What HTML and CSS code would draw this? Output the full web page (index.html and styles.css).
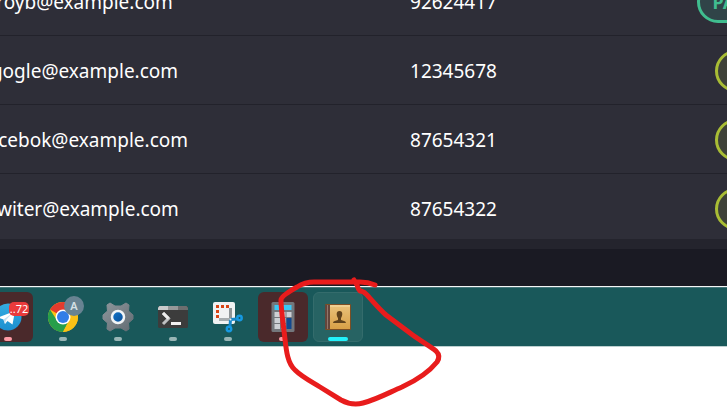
FILE: index.html
```
<!DOCTYPE html>
<html lang="en">
<head>
<meta charset="utf-8">
<title>Members</title>
<link rel="stylesheet" href="styles.css">
</head>
<body>
<main class="app">
  <table class="members">
    <colgroup><col class="col-wide"><col class="col-wide"><col class="col-status"></colgroup>
    <tbody>
      <tr><td>royb@example.com</td><td>92624417</td><td><span class="badge badge-green">PA</span></td></tr>
      <tr><td>gogle@example.com</td><td>12345678</td><td><span class="badge badge-lime"></span></td></tr>
      <tr><td>facebok@example.com</td><td>87654321</td><td><span class="badge badge-lime"></span></td></tr>
      <tr><td>twiter@example.com</td><td>87654322</td><td><span class="badge badge-lime"></span></td></tr>
    </tbody>
  </table>
  <div class="table-foot"></div>
</main>
<nav class="taskbar" aria-label="Taskbar">
  <button class="task alert" aria-label="Telegram">
    <svg class="icon" viewBox="0 0 40 40">
      <defs><linearGradient id="tg" x1="0" y1="0" x2="0" y2="1"><stop offset="0" stop-color="#35ace0"/><stop offset="1" stop-color="#1c8fd0"/></linearGradient></defs>
      <circle cx="20" cy="20" r="13.5" fill="url(#tg)"/>
      <path d="M10 20.500 27 14 24.500 27.500 19.500 24 17 27 15.500 22.500Z" fill="#fff"/>
      <path d="M15.500 22.500 24 16.500 18 23 17 27Z" fill="#c5dff0"/>
    </svg>
    <span class="count">..72</span>
  </button>
  <button class="task" aria-label="Chrome">
    <svg class="icon" viewBox="0 0 40 40">
      <circle cx="20" cy="20" r="15" fill="#fbc116"/>
      <path d="M20 20 7 12.500A15 15 0 0 1 33 12.500V13H20Z" fill="#e33b2e"/>
      <path d="M7 12.500A15 15 0 0 0 20 35L26 23.500 14 23.500Z" fill="#269e4b"/>
      <path d="M20 13H33.300A15 15 0 0 1 20 35L26.100 23.500Z" fill="#fbc116"/>
      <circle cx="20" cy="20" r="7.500" fill="#fff"/>
      <circle cx="20" cy="20" r="6" fill="#327ee8"/>
    </svg>
    <span class="profile">A</span>
  </button>
  <button class="task" aria-label="Settings">
    <svg class="icon" viewBox="0 0 40 40">
      <defs><linearGradient id="gear" x1="0" y1="0" x2="1" y2="1"><stop offset="0" stop-color="#8e969c"/><stop offset="1" stop-color="#626b72"/></linearGradient><linearGradient id="hub" x1="0" y1="0" x2="1" y2="1"><stop offset="0" stop-color="#1577cb"/><stop offset="1" stop-color="#084c96"/></linearGradient></defs>
      <path d="M12 6 17 9H23L28 6 31 8 30.500 14 35 18V22L30.500 26 31 32 28 34 23 31H17L12 34 9 32 9.500 26 5 22V18L9.500 14 9 8Z" fill="url(#gear)" stroke="url(#gear)" stroke-linejoin="round"/>
      <circle cx="20" cy="20" r="6" fill="url(#hub)" stroke="#f1f4f6" stroke-width="2.500"/>
    </svg>
  </button>
  <button class="task" aria-label="Terminal">
    <svg class="icon" viewBox="0 0 40 40">
      <rect x="5" y="9" width="30" height="22" rx="1.500" fill="#3c3c3c"/>
      <path d="M6.500 9H15V13H5V10.500Z" fill="#c9cbcc"/><path d="M15 9H25V13H15Z" fill="#969899"/><path d="M25 9H33.500L35 10.500V13H25Z" fill="#6c6e6f"/>
      <path d="M10 16 15.500 21.500 10 27" fill="none" stroke="#bfc1c2" stroke-width="3"/>
      <path d="M10 16 15.500 21.500" stroke="#ededed" stroke-width="3"/>
      <path d="M18 26.500H28" stroke="#f1f1f1" stroke-width="3"/>
    </svg>
  </button>
  <button class="task" aria-label="Snipping Tool">
    <svg class="icon" viewBox="0 0 40 40">
      <rect x="5" y="5" width="22" height="22" rx="2" fill="#f0f2f3"/>
      <path d="M8 9.500H21" stroke="#d84515" stroke-width="3" stroke-dasharray="3 2"/><path d="M9.500 13V21" stroke="#d84515" stroke-width="3" stroke-dasharray="3 2"/>
      <path d="M22.500 11V23" stroke="#8d9497" stroke-width="3"/><path d="M11 22.500H23" stroke="#a7adb0" stroke-width="3"/>
      <path d="M22.500 22.500 29 22M22.500 22.500 22 29" stroke="#1687c9" stroke-width="3"/>
      <circle cx="31.500" cy="21" r="2.200" fill="none" stroke="#1699e2" stroke-width="2.500"/>
      <circle cx="21" cy="32" r="2.200" fill="none" stroke="#1699e2" stroke-width="2.500"/>
      <circle cx="22.500" cy="22.500" r="1" fill="#e6e9ea"/>
    </svg>
  </button>
  <button class="task alert" aria-label="Calculator">
    <svg class="icon" viewBox="0 0 40 40">
      <rect x="8.500" y="5" width="23" height="30" rx="1.500" fill="#74777c"/>
      <rect x="11.500" y="8" width="17" height="5" fill="#3ac8f5"/>
      <path d="M11.500 15H17V20H11.500ZM18 15H22.500V20H18ZM23.500 15H28.500V20H23.500ZM11.500 21H17V26H11.500ZM18 21H22.500V26H18ZM11.500 27H17V32H11.500ZM18 27H22.500V32H18Z" fill="#cdd0d5"/>
      <path d="M23.500 21H28.500V32H23.500Z" fill="#12498f"/>
    </svg>
  </button>
  <button class="task active" aria-label="Contacts">
    <svg class="icon" viewBox="0 0 40 40">
      <defs><linearGradient id="book" x1="0" y1="0" x2="0" y2="1"><stop offset="0" stop-color="#e9c27b"/><stop offset="1" stop-color="#d8a047"/></linearGradient></defs>
      <rect x="7" y="7" width="26" height="26" rx="1" fill="#7b4e24"/>
      <rect x="7" y="8" width="5" height="24" fill="#64463b"/><path d="M9.500 8V32" stroke="#90766c"/>
      <rect x="12" y="8" width="20" height="24" fill="url(#book)"/><path d="M12 9H32" stroke="#f5dda8"/>
      <path d="M21.500 14C25.500 14 24.500 19 23 21V23C25 24 27.500 23.500 28 26H15C15.500 23.500 18 24 20 23V21C18.500 19 17.500 14 21.500 14Z" fill="#60421c"/>
    </svg>
  </button>
</nav>
<svg class="markup" width="170" height="140" viewBox="275 270 170 140" aria-hidden="true">
  <path d="M375 285Q368 282 360 282H314Q305 282 297 287Q281 296 281 300C281 309 283 322 284 331C286 345 286 362 295 370C302 377 312 382 320 387L341 400Q352 406 363 403C378 399 390 392 402 387C415 381 429 372 437 362Q441 356 436 351C430 346 419 340 410 333L386 315C378 308 371 299 366 294Q363 291 360 291Q358 289 357 285L354 280"/>
</svg>
</body>
</html>
```
FILE: styles.css
```
* { box-sizing: border-box; }

body {
  margin: 0;
  background: #fff;
  font-family: "Segoe UI", "Noto Sans", sans-serif;
  overflow: hidden;
}

.app {
  background: #1a1a23;
  padding-bottom: 37px;
  overflow: hidden;
  border-bottom: 1px solid #f4f6f6;
}

.members {
  width: calc(100% + 284px);
  margin: -33px -184px 0 -100px;
  border-spacing: 0;
  table-layout: fixed;
  background: #2e2e38;
  color: #fff;
  font-size: 19px;
  line-height: 42px;
}

.col-wide { width: 369px; }

.members td {
  padding: 14px 0 12px;
  text-align: center;
  border-bottom: 1px solid #22222b;
}

.members tr:last-child td {
  padding-bottom: 9px;
  border-bottom: 0;
}

.badge {
  display: block;
  height: 42px;
  margin: 0 auto;
  border: 3px solid;
  border-radius: 21px;
  font-size: 18px;
  font-weight: 700;
  line-height: 36px;
  text-align: left;
}

.badge-green {
  width: 156px;
  padding-left: 13px;
  color: #40bd8f;
  border-color: #40bd8f;
  background: #304448;
}

.badge-lime {
  width: 120px;
  border-color: #a9bd35;
  background: #3e4138;
}

.table-foot {
  height: 10px;
  background: #24242d;
}

.taskbar {
  display: flex;
  gap: 5px;
  padding: 4px 0;
  background: #19585a;
  border-top: 1px solid #47777a;
  border-bottom: 1px solid #bdd0d0;
}

.task {
  position: relative;
  display: flex;
  justify-content: center;
  flex: none;
  width: 50px;
  height: 50px;
  padding: 5px 0 0;
  border: 0;
  border-radius: 6px;
  background: none;
  font-family: inherit;
}

.task:first-child { margin-left: -17px; }

.task::after {
  content: "";
  position: absolute;
  bottom: 1px;
  left: 21px;
  width: 8px;
  height: 4px;
  border-radius: 2px;
  background: #98b5b5;
}

.alert { background: #4a292b; }
.alert::after { background: #ff9ba5; }

.active {
  background: #276363;
  border: 1px solid #346c6c;
  padding-top: 4px;
}

.active::after {
  left: 14px;
  bottom: 0;
  width: 20px;
  background: #23f1fb;
}

.icon {
  width: 40px;
  height: 40px;
}

.count {
  position: absolute;
  top: 10px;
  right: 4px;
  width: 20px;
  height: 14px;
  border-radius: 5px;
  background: #e93b3c;
  color: #fff;
  font-size: 11px;
  line-height: 14px;
  text-align: center;
}

.profile {
  position: absolute;
  top: 4px;
  right: 4px;
  width: 20px;
  height: 20px;
  border-radius: 50%;
  background: #688392;
  color: #d6e0e5;
  font-size: 11px;
  font-weight: 600;
  line-height: 20px;
  text-align: center;
}

.markup {
  position: absolute;
  left: 275px;
  top: 270px;
  pointer-events: none;
}

.markup path {
  fill: none;
  stroke: #e81c1c;
  stroke-width: 5;
  stroke-linecap: round;
  stroke-linejoin: round;
}
```
